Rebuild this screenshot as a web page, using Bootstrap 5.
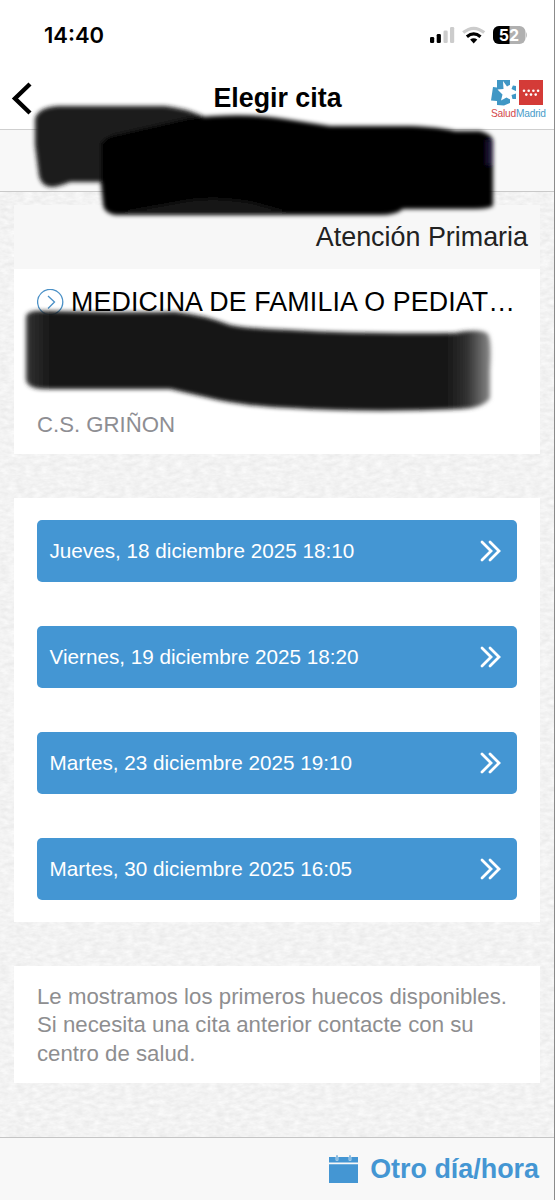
<!DOCTYPE html>
<html lang="es">
<head>
<meta charset="utf-8">
<meta name="viewport" content="width=device-width, initial-scale=1">
<title>Elegir cita</title>
<link href="https://cdn.jsdelivr.net/npm/bootstrap@5.3.0/dist/css/bootstrap.min.css" rel="stylesheet">
<style>
body{font-family:"Liberation Sans",Arial,sans-serif;background:#fff;color:#000;overflow:hidden;line-height:1}
.screen{width:555px;height:1200px;border-right:1px solid #8b8b8b}
.status{height:72px;padding:0 27px 2px 44px}
.clock{font:600 22px/70px Inter,sans-serif}
.topbar{height:58px;border-bottom:1px solid #cfcfcf;padding:0 10px 4px 11px}
.heading{font-size:26.8px;font-weight:700;line-height:30px;padding-bottom:2px}
.side{width:54px}
.brand{font-size:10.2px;line-height:12px;letter-spacing:-.22px;white-space:nowrap;padding:2px 0 0 1px;margin-bottom:-1px}
.patient{height:62px;background:#f8f8f8;border-bottom:1px solid #c9c9c9}
.paper{padding:13px 14px 0 14px;background-color:#f1f1f1;background-image:url("data:image/svg+xml,%3Csvg xmlns='http://www.w3.org/2000/svg' width='200' height='200'%3E%3Cfilter id='n' x='0' y='0' width='100%25' height='100%25' color-interpolation-filters='sRGB'%3E%3CfeTurbulence type='fractalNoise' baseFrequency='.12 .24' numOctaves='3' seed='4' stitchTiles='stitch'/%3E%3CfeColorMatrix values='.09 0 0 0 .905 .09 0 0 0 .905 .09 0 0 0 .905 0 0 0 0 1'/%3E%3C/filter%3E%3Crect width='200' height='200' filter='url(%23n)'/%3E%3C/svg%3E")}
.kind{height:64px;background:#f7f7f7;font-size:26.9px;color:#222;padding:0 12px 0 0}
.doctor{height:184.500px;background:#fff;padding:16px 23px}
.specialty{font-size:26.8px;line-height:34px;letter-spacing:.14px;margin-left:-1px}
.centre{font-size:22.2px;color:#8e8e93;line-height:28px;margin-top:92px}
.slots{background:#fff;padding:22px 23px;margin-top:44px;height:424px;gap:44px}
.slot{background:#4496d3;border:0;border-radius:5px;height:62.2px;color:#fff;font-size:20.7px;padding:1px 16px 0 12.500px;line-height:1}
.slot:hover{background:#3b8bc7;color:#fff}
.note{background:#fff;color:#8e8e90;font-size:22.2px;letter-spacing:.03px;line-height:28.5px;height:117px;padding:17px 23px;margin-top:44px;white-space:nowrap}
.bottombar{height:63px;background:#f8f8f8;border-top:1px solid #c5c5c5;padding:0 15px 0 0;color:#4496d3;font-size:26.9px}
.marker{left:0;top:0;pointer-events:none}
</style>
</head>
<body>
<div class="screen position-relative d-flex flex-column">
  <div class="status d-flex justify-content-between align-items-center">
    <span class="clock">14:40</span>
    <svg width="98" height="18" viewBox="0 0 98 18">
      <rect x="1" y="11" width="4.2" height="6" rx="1.3"/><rect x="7.7" y="8" width="4.2" height="9" rx="1.3"/>
      <rect x="14.5" y="4.5" width="4.2" height="12.5" rx="1.3" fill="#ccc"/><rect x="21" y="1" width="4.2" height="16" rx="1.3" fill="#ccc"/>
      <g fill="none" stroke-width="3.2"><path d="M34.200 6.600Q44.700 -2 55.200 6.600" stroke="#ccc"/><path d="M37.900 10.800Q44.700 4.900 51.500 10.800" stroke="#000"/></g>
      <path d="M41.100 13.500Q44.700 10.800 48.300 13.500L44.700 17.400Z"/>
      <rect x="64" y="0" width="32.500" height="18" rx="6" fill="#b0b0b0"/><path d="M80.500 0H70a6 6 0 0 0-6 6v6a6 6 0 0 0 6 6h10.500z"/>
      <path d="M97.200 6q1.600 3 0 6z" fill="#b0b0b0"/>
      <text x="69.800" y="14.800" font-family="Inter,sans-serif" font-weight="700" font-size="16" fill="#fff">52</text>
    </svg>
  </div>
  <header class="topbar d-flex justify-content-between align-items-center">
    <div class="side"><svg width="23" height="34" viewBox="0 0 23 34" class="d-block"><path d="M19 2L4 16.500L19 31" fill="none" stroke="#000" stroke-width="4.4"/></svg></div>
    <h1 class="heading m-0">Elegir cita</h1>
    <div class="side">
      <svg width="54" height="27" viewBox="0 0 54 27" class="d-block">
        <path d="M7 1H20V6L26 7V20H20V24L14 26.500L7 26V22L1 21.500L3 8L7 8.500Z" fill="#4097c5"/>
        <path d="M13 2L17 7.500L24 3.500L21.500 10L29 13.500L21.500 16L23 22L16.500 18.500L11 21.500L12.500 15.500L7.500 10.500L13.500 10Z" fill="#fff"/>
        <rect x="29" y="1" width="24" height="25" fill="#d43b37"/>
        <g fill="#fff"><circle cx="34" cy="11.700" r="1.300"/><circle cx="38.700" cy="11.700" r="1.300"/><circle cx="43.400" cy="11.700" r="1.300"/><circle cx="48.100" cy="11.700" r="1.300"/><circle cx="36.300" cy="15.600" r="1.300"/><circle cx="41" cy="15.600" r="1.300"/><circle cx="45.700" cy="15.600" r="1.300"/></g>
      </svg>
      <div class="brand"><span style="color:#d3494b">Salud</span><span style="color:#4a9dca">Madrid</span></div>
    </div>
  </header>
  <div class="patient"></div>
  <main class="paper flex-grow-1">
    <section>
      <div class="kind d-flex align-items-center justify-content-end">Atención Primaria</div>
      <div class="doctor">
        <div class="d-flex align-items-center">
          <svg width="27" height="27" viewBox="0 0 27 27" class="flex-shrink-0 me-2" fill="none" stroke="#4a90c6" stroke-width="1.300"><circle cx="13.200" cy="13" r="12.600"/><path d="M11 7L17.500 13L11 19.500"/></svg>
          <div class="specialty text-nowrap">MEDICINA DE FAMILIA O PEDIAT…</div>
        </div>
        <div class="centre">C.S. GRIÑON</div>
      </div>
    </section>
    <section class="slots d-flex flex-column">
      <button class="slot btn d-flex align-items-center justify-content-between">Jueves, 18 diciembre 2025 18:10 <svg width="21" height="22" viewBox="0 0 21 22" fill="none" stroke="#fff" stroke-width="2.800" stroke-linecap="round"><path d="M2 2L11 11L2 20M10 2L19 11L10 20"/></svg></button>
      <button class="slot btn d-flex align-items-center justify-content-between">Viernes, 19 diciembre 2025 18:20 <svg width="21" height="22" viewBox="0 0 21 22" fill="none" stroke="#fff" stroke-width="2.800" stroke-linecap="round"><path d="M2 2L11 11L2 20M10 2L19 11L10 20"/></svg></button>
      <button class="slot btn d-flex align-items-center justify-content-between">Martes, 23 diciembre 2025 19:10 <svg width="21" height="22" viewBox="0 0 21 22" fill="none" stroke="#fff" stroke-width="2.800" stroke-linecap="round"><path d="M2 2L11 11L2 20M10 2L19 11L10 20"/></svg></button>
      <button class="slot btn d-flex align-items-center justify-content-between">Martes, 30 diciembre 2025 16:05 <svg width="21" height="22" viewBox="0 0 21 22" fill="none" stroke="#fff" stroke-width="2.800" stroke-linecap="round"><path d="M2 2L11 11L2 20M10 2L19 11L10 20"/></svg></button>
    </section>
    <section class="note">Le mostramos los primeros huecos disponibles.<br>Si necesita una cita anterior contacte con su<br>centro de salud.</section>
  </main>
  <footer class="bottombar d-flex align-items-center justify-content-end fw-bold">
    <svg width="29" height="29" viewBox="0 0 29 29" class="me-2"><path d="M0 2H29V7.500H0ZM0 9.200H29V28H0Z" fill="#4496d3"/><path d="M8 0V5.500M21 0V5.500" stroke="#f8f8f8" stroke-width="2.600"/><path d="M8 .2V5M21 .2V5" stroke="#4496d3" stroke-width="1.200"/></svg>
    <span class="ms-1">Otro día/hora</span>
  </footer>

  <!-- marker strokes that cover the personal data -->
  <svg class="marker position-absolute" width="554" height="430" viewBox="0 0 554 430">
    <defs><filter id="soft" x="-5%" y="-10%" width="110%" height="120%"><feGaussianBlur stdDeviation="2"/></filter>
    <linearGradient id="fade" x1="0" x2="1"><stop offset="0" stop-color="#333"/><stop offset=".06" stop-color="#141414"/><stop offset=".9" stop-color="#141414"/><stop offset=".95" stop-color="#333"/><stop offset="1" stop-color="#8a8a8a"/></linearGradient></defs>
    <g filter="url(#soft)">
      <path d="M35 118Q39 107 58 106H165Q184 108 203 116V182H70Q58 187 51 187Q41 186 39 176L35 145Z" fill="#1c1c1c"/>
      <path d="M101 145Q103 137 120 134L190 118Q245 112 285 119L330 126H410Q440 127 455 131H480Q491 134 493 140V206Q488 209 475 209H403Q396 215 380 215H116Q103 213 103 203L101 184Z" fill="#000"/>
      <path d="M118 213Q150 207 190 200Q215 196 250 202L290 213Z" fill="#151515"/>
      <path d="M486 140h6v25h-6z" fill="#1b1530"/>
      <path d="M26 316Q28 310 45 311Q120 313 175 312Q205 315 230 325Q250 329 290 330Q360 334 455 333Q480 328 488 334Q492 342 490 370V398Q484 408 460 409Q370 413 290 408Q240 406 205 397L170 389H45Q28 389 26 380Z" fill="url(#fade)"/>
    </g>
  </svg>
</div>
<script src="https://cdn.jsdelivr.net/npm/bootstrap@5.3.0/dist/js/bootstrap.bundle.min.js"></script>
</body>
</html>
